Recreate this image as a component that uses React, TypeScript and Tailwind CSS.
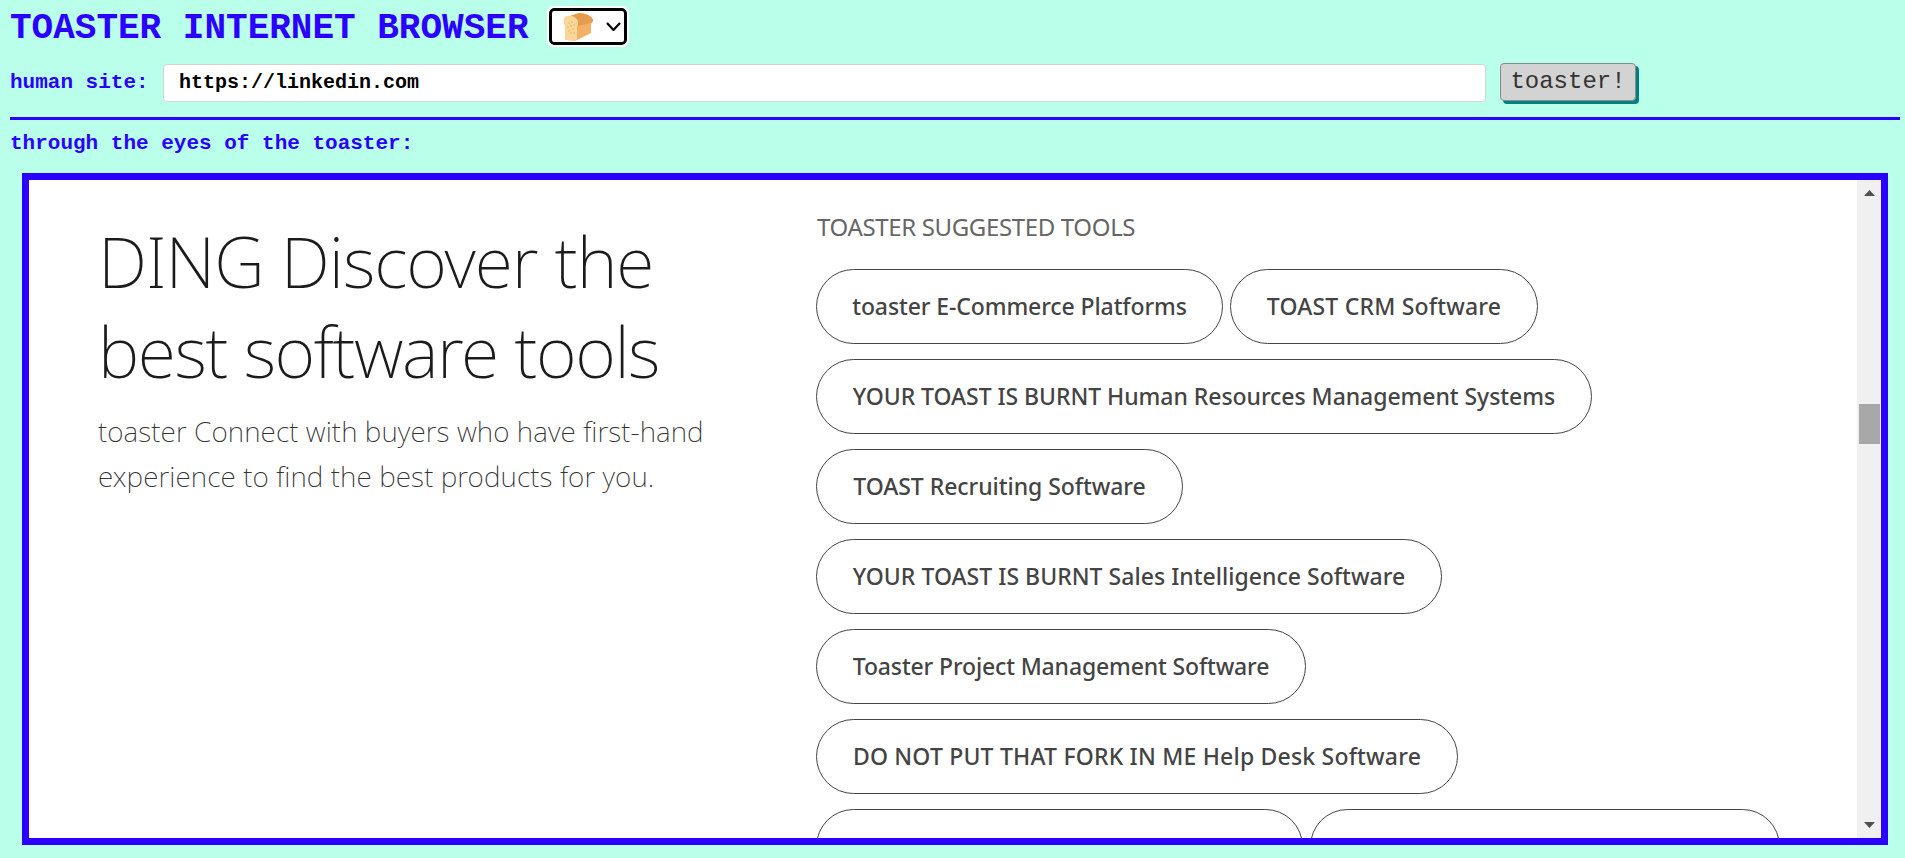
const sans = "font-['Noto_Sans','Open_Sans',sans-serif]";

const tools = [
  { label: "toaster E-Commerce Platforms", size: "w-[407px] tracking-[-0.1px]" },
  { label: "TOAST CRM Software", size: "w-[308px] tracking-[0.2px]" },
  { label: "YOUR TOAST IS BURNT Human Resources Management Systems", size: "w-[776px] tracking-[-0.05px]" },
  { label: "TOAST Recruiting Software", size: "w-[367px] tracking-[-0.05px]" },
  { label: "YOUR TOAST IS BURNT Sales Intelligence Software", size: "w-[626px] tracking-[0.03px]" },
  { label: "Toaster Project Management Software", size: "w-[490px] tracking-[-0.15px]" },
  { label: "DO NOT PUT THAT FORK IN ME Help Desk Software", size: "w-[642px] tracking-[0.2px]" },
];

function BreadIcon() {
  return (
    <svg width="30" height="28" viewBox="0 0 30 28">
      <path d="M1 9 C0 5 3 3 7 3 L16 0 C22 0 29 3 30 7 C30 10 28 10 28 12 L28 20 L12 28 L4 27 C2 27 2 25 2 23 L2 13 C2 11 1 11 1 9 Z" fill="#f4b066" />
      <path d="M7 3 L16 0 C22 0 29 3 30 7 C30 9 28 10 27 10 L15 13 C16 7 12 3 7 3 Z" fill="#e69c4f" />
      <path d="M1 9 C0 5 3 3 7 3 C12 3 15 6 15 10 C15 12 14 12 14 14 L14 25 C14 27 13 28 11 28 L5 27 C3 27 2 26 2 24 L2 13 C2 11 1 11 1 9 Z" fill="#fbd699" />
      <g fill="#e8a862">
        <circle cx="6" cy="10" r="0.7" /><circle cx="9" cy="9" r="0.7" /><circle cx="11" cy="12" r="0.7" />
        <circle cx="5" cy="14" r="0.7" /><circle cx="8" cy="13" r="0.7" /><circle cx="10" cy="16" r="0.7" />
        <circle cx="6" cy="18" r="0.7" /><circle cx="8" cy="20" r="0.7" /><circle cx="11" cy="20" r="0.7" />
      </g>
    </svg>
  );
}

function ToolPill({ label, size }: { label: string; size: string }) {
  return (
    <div className={`flex h-[75px] items-center justify-center rounded-full border border-[#444] text-[23px] font-medium text-[#444] ${size}`}>
      {label}
    </div>
  );
}

function Scrollbar() {
  return (
    <div className="flex w-[24px] shrink-0 flex-col items-center bg-[#f0f0f0]">
      <svg className="mt-[10px]" width="11" height="6" viewBox="0 0 11 6">
        <path d="M5.5 0 L11 6 L0 6 Z" fill="#505050" />
      </svg>
      <div className="ml-[1px] mt-[208px] h-[40px] w-[21px] bg-[#a8a8a8]" />
      <svg className="mt-auto mb-[10px]" width="11" height="6" viewBox="0 0 11 6">
        <path d="M0 0 L11 0 L5.5 6 Z" fill="#505050" />
      </svg>
    </div>
  );
}

export default function App() {
  return (
    <div className="h-[858px] w-full overflow-hidden bg-[#b9ffe9] px-[10px] font-['Liberation_Mono',monospace] text-[#2b00ff]">
      <div className="flex items-start pt-[8px]">
        <h1 className="pt-[2px] text-[36px] font-bold leading-[37px]">TOASTER INTERNET BROWSER</h1>
        <div className="ml-[21px] flex h-[37px] w-[78px] items-center rounded-[5px] border-[3px] border-black bg-white pl-[11px] outline-2 outline-white">
          <BreadIcon />
          <svg className="ml-[13px]" width="15" height="9" viewBox="0 0 15 9">
            <path d="M1 1 L7.5 8 L14 1" fill="none" stroke="#000" strokeWidth="2.2" />
          </svg>
        </div>
      </div>

      <div className="mt-[17px] flex items-center">
        <label className="w-[153px] text-[21px] font-bold">human site:</label>
        <div className="flex h-[38px] w-[1323px] items-center rounded-[4px] border border-[#d4d4d4] bg-white pl-[15px] text-[20px] font-bold text-black">
          https://linkedin.com
        </div>
        <button className="-mt-[1px] ml-[14px] h-[38px] w-[136px] self-start rounded-[4px] border border-[#8a8a8a] bg-[#d3d3d3] text-[24px] text-[#333] shadow-[3px_3px_0_#008080]">
          toaster!
        </button>
      </div>

      <div className="mt-[15px] h-[3px] w-[1890px] bg-[#2b00ff]" />

      <p className="mt-[12px] text-[21px] font-bold leading-[24px]">through the eyes of the toaster:</p>

      <div className={`ml-[12px] mt-[17px] flex h-[672px] w-[1866px] overflow-hidden border-[7px] border-[#2b00ff] bg-white ${sans}`}>
        <div className="flex min-w-0 flex-1 overflow-hidden">
          <div className="w-[787px] shrink-0 pl-[69px] pt-[36px]">
            <h2 className="text-[70px] font-extralight leading-[90px] text-[#1b1b1b]">
              <span className="tracking-[-1.05px]">DING Discover the</span>
              <br />
              <span className="tracking-[-1.45px]">best software tools</span>
            </h2>
            <p className="mt-[13px] w-[640px] text-[28px] font-extralight leading-[45px] tracking-[0.08px] text-[#333]">
              toaster Connect with buyers who have first-hand experience to find the best products for you.
            </p>
          </div>
          <div className="flex-1 pt-[30px]">
            <h3 className="pl-[1px] text-[24px] leading-[34px] tracking-[-0.35px] text-[#666]">TOASTER SUGGESTED TOOLS</h3>
            <div className="mt-[25px] flex w-[970px] flex-wrap gap-x-[7px] gap-y-[15px]">
              {tools.map((t) => (
                <ToolPill key={t.label} label={t.label} size={t.size} />
              ))}
              <div className="h-[75px] w-[487px] rounded-full border border-[#444]" />
              <div className="h-[75px] w-[470px] rounded-full border border-[#444]" />
            </div>
          </div>
        </div>
        <Scrollbar />
      </div>
    </div>
  );
}
